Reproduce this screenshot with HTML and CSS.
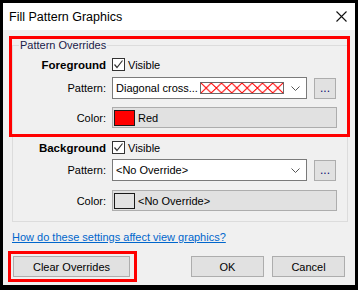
FILE: index.html
```html
<!DOCTYPE html>
<html>
<head>
<meta charset="utf-8">
<link rel="stylesheet" href="styles.css">
</head>
<body>
<div class="dialog">
  <div class="titlebar">
    <span class="title">Fill Pattern Graphics</span>
    <svg class="close" width="11" height="11" viewBox="0 0 11 11"><path d="M0.5 0.5L10.5 10.5M10.5 0.5L0.5 10.5" stroke="#111" stroke-width="1.1" fill="none"/></svg>
  </div>
  <div class="content">
    <fieldset class="group">
      <legend class="legend">Pattern Overrides</legend>
      <div class="section">
        <div class="row head">
          <span class="lbl bold">Foreground</span>
          <span class="check"><svg width="11" height="11" viewBox="0 0 11 11"><path d="M1.5 5.5L4 8.5L9.5 1.5" stroke="#333" stroke-width="1.2" fill="none"/></svg></span>
          <span class="checktext">Visible</span>
        </div>
        <div class="row combo-row">
          <span class="lbl">Pattern:</span>
          <div class="combo">
            <span class="combo-text">Diagonal cross...</span>
            <span class="pat-swatch"><svg width="82" height="10" viewBox="0 0 82 10"><defs><pattern id="dc" width="10.25" height="10" patternUnits="userSpaceOnUse"><path d="M0 0L10.25 10M10.25 0L0 10" stroke="#ff0000" stroke-width="1" fill="none"/></pattern></defs><rect width="82" height="10" fill="#fff"/><rect width="82" height="10" fill="url(#dc)"/></svg></span>
            <span class="chev"><svg width="9" height="5" viewBox="0 0 9 5"><path d="M0.5 0.5L4.5 4.5L8.5 0.5" stroke="#555" stroke-width="1" fill="none"/></svg></span>
          </div>
          <button class="more">...</button>
        </div>
        <div class="row color-row">
          <span class="lbl">Color:</span>
          <div class="colorfield">
            <span class="swatch red"></span>
            <span class="ctext">Red</span>
          </div>
        </div>
      </div>
      <div class="section second">
        <div class="row head">
          <span class="lbl bold">Background</span>
          <span class="check"><svg width="11" height="11" viewBox="0 0 11 11"><path d="M1.5 5.5L4 8.5L9.5 1.5" stroke="#333" stroke-width="1.2" fill="none"/></svg></span>
          <span class="checktext">Visible</span>
        </div>
        <div class="row combo-row">
          <span class="lbl">Pattern:</span>
          <div class="combo">
            <span class="combo-text">&lt;No Override&gt;</span>
            <span class="chev"><svg width="9" height="5" viewBox="0 0 9 5"><path d="M0.5 0.5L4.5 4.5L8.5 0.5" stroke="#555" stroke-width="1" fill="none"/></svg></span>
          </div>
          <button class="more">...</button>
        </div>
        <div class="row color-row">
          <span class="lbl">Color:</span>
          <div class="colorfield">
            <span class="swatch none"></span>
            <span class="ctext">&lt;No Override&gt;</span>
          </div>
        </div>
      </div>
    </fieldset>
    <a class="link" href="#">How do these settings affect view graphics?</a>
    <div class="buttons">
      <button class="btn clear">Clear Overrides</button>
      <button class="btn ok">OK</button>
      <button class="btn cancel">Cancel</button>
    </div>
  </div>
  <div class="mark mark-group"></div>
  <div class="mark mark-clear"></div>
</div>
</body>
</html>
```

FILE: styles.css
```css
html, body {
  margin: 0;
  padding: 0;
}
body {
  background: #000;
  width: 358px;
  height: 290px;
  overflow: hidden;
  font-family: "Liberation Sans", Arial, sans-serif;
  font-size: 11px;
  color: #000;
}
.dialog {
  position: relative;
  margin: 3px 3px 5px 3px;
  width: 352px;
  height: 282px;
  background: #f0f0f0;
  display: flex;
  flex-direction: column;
}
.titlebar {
  height: 27px;
  background: #fff;
  display: flex;
  align-items: center;
  justify-content: space-between;
  padding: 0 8px 0 6px;
  flex-shrink: 0;
}
.title {
  font-size: 12.5px;
  color: #000;
}
.close {
  display: block;
}
.content {
  padding: 0 7px 0 9px;
  display: flex;
  flex-direction: column;
}
.group {
  margin: 8px 0 0 0;
  padding: 0 0 10px 0;
  border: 1px solid #dcdcdc;
  min-width: 0;
}
.legend {
  margin-left: 6px;
  padding: 0 1px;
  line-height: 14px;
  font-size: 11px;
  color: #1a2048;
}
.section {
  display: flex;
  flex-direction: column;
  padding-top: 4px;
}
.section.second {
  padding-top: 11px;
}
.row {
  display: flex;
  align-items: center;
}
.row.head {
  height: 17px;
}
.combo-row {
  margin-top: 4px;
}
.second .combo-row {
  margin-top: 3px;
}
.color-row {
  margin-top: 8px;
}
.second .color-row {
  margin-top: 9px;
}
.lbl {
  width: 93px;
  text-align: right;
  margin-right: 6px;
  flex-shrink: 0;
}
.bold {
  font-weight: bold;
  font-size: 11.5px;
}
.check {
  width: 13px;
  height: 13px;
  box-sizing: border-box;
  border: 1px solid #333;
  background: #fff;
  display: flex;
  align-items: center;
  justify-content: center;
}
.check svg {
  display: block;
}
.checktext {
  margin-left: 3px;
}
.combo {
  width: 195px;
  height: 22px;
  box-sizing: border-box;
  border: 1px solid #7a7a7a;
  background: #fff;
  display: flex;
  align-items: center;
}
.combo-text {
  flex: 1;
  min-width: 0;
  padding-left: 3px;
  white-space: nowrap;
  overflow: hidden;
}
.pat-swatch {
  width: 84px;
  height: 12px;
  box-sizing: border-box;
  border: 1px solid #6a6a6a;
  flex-shrink: 0;
}
.pat-swatch svg {
  display: block;
}
.chev {
  width: 22px;
  display: flex;
  justify-content: center;
  align-items: center;
  flex-shrink: 0;
}
.chev svg {
  display: block;
}
.more {
  margin: 0 0 0 7px;
  width: 22px;
  height: 21px;
  box-sizing: border-box;
  border: 1px solid #adadad;
  background: #e1e1e1;
  padding: 0 0 1px 0;
  font-family: "Liberation Sans", Arial, sans-serif;
  font-size: 12px;
  color: #0a0a70;
  line-height: 19px;
}
.colorfield {
  width: 225px;
  height: 21px;
  box-sizing: border-box;
  border: 1px solid #adadad;
  background: #e1e1e1;
  display: flex;
  align-items: center;
}
.swatch {
  width: 21px;
  height: 16px;
  box-sizing: border-box;
  border: 1px solid #1a1a1a;
  margin-left: 1px;
}
.swatch.red {
  background: #ff0000;
}
.swatch.none {
  background: #e3e3e3;
}
.ctext {
  margin-left: 3px;
}
.link {
  margin: 8px 0 0 0;
  line-height: 14px;
  color: #0066cc;
  text-decoration: underline;
  align-self: flex-start;
}
.buttons {
  display: flex;
  margin: 12px -7px 0 -9px;
  padding: 0 10px;
}
.btn {
  height: 21px;
  box-sizing: border-box;
  border: 1px solid #adadad;
  background: #e1e1e1;
  padding: 0;
  font-family: "Liberation Sans", Arial, sans-serif;
  font-size: 11px;
  color: #000;
}
.clear {
  width: 117px;
}
.ok {
  width: 73px;
  margin-left: auto;
}
.cancel {
  width: 73px;
  margin-left: 8px;
}
.mark {
  position: absolute;
  box-sizing: border-box;
  border: 3px solid #ff0000;
  pointer-events: none;
}
.mark-group {
  left: 6px;
  top: 33px;
  width: 341px;
  height: 101px;
}
.mark-clear {
  left: 5px;
  top: 248px;
  width: 129px;
  height: 31px;
}
```
